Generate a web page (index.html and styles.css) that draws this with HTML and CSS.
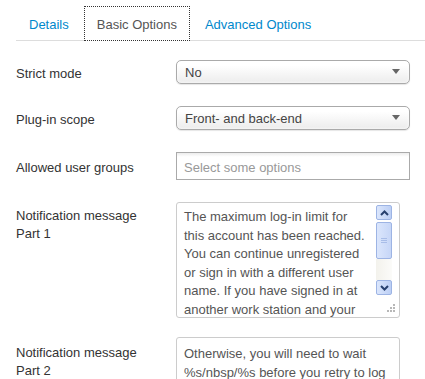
FILE: index.html
```html
<!DOCTYPE html>
<html>
<head>
<meta charset="utf-8">
<link rel="stylesheet" href="styles.css">
</head>
<body>
<div class="page">
  <ul class="tabs">
    <li class="tab"><a href="#">Details</a></li>
    <li class="tab active"><a href="#">Basic Options</a></li>
    <li class="tab"><a href="#">Advanced Options</a></li>
  </ul>
  <div class="form">
    <div class="row row-select">
      <div class="label">Strict mode</div>
      <div class="select"><span class="select-text">No</span><svg class="caret" width="8" height="5" viewBox="0 0 8 5"><polygon points="0,0 8,0 4,5" fill="#666"/></svg></div>
    </div>
    <div class="row row-select">
      <div class="label">Plug-in scope</div>
      <div class="select"><span class="select-text">Front- and back-end</span><svg class="caret" width="8" height="5" viewBox="0 0 8 5"><polygon points="0,0 8,0 4,5" fill="#666"/></svg></div>
    </div>
    <div class="row row-input">
      <div class="label">Allowed user groups</div>
      <div class="multi"><span class="placeholder">Select some options</span></div>
    </div>
    <div class="row row-text">
      <div class="label label-text">Notification message<br>Part 1</div>
      <div class="textarea">
        <div class="ta-text">The maximum log-in limit for this account has been reached. You can continue unregistered or sign in with a different user name. If you have signed in at another work station and your session is still active there, you will need to log out first.</div>
        <div class="scrollbar">
          <div class="sb-btn"><svg width="9" height="6" viewBox="0 0 9 6"><polyline points="1,5 4.5,1.5 8,5" fill="none" stroke="#27406e" stroke-width="2"/></svg></div>
          <div class="sb-thumb"><span class="grip-line"></span><span class="grip-line"></span><span class="grip-line"></span></div>
          <div class="sb-track"></div>
          <div class="sb-btn"><svg width="9" height="6" viewBox="0 0 9 6"><polyline points="1,1 4.5,4.5 8,1" fill="none" stroke="#27406e" stroke-width="2"/></svg></div>
          <div class="sb-corner">
            <svg width="8" height="8" viewBox="0 0 8 8"><g fill="#b8b8b8"><rect x="6" y="0" width="2" height="2"/><rect x="3" y="3" width="2" height="2"/><rect x="6" y="3" width="2" height="2"/><rect x="0" y="6" width="2" height="2"/><rect x="3" y="6" width="2" height="2"/><rect x="6" y="6" width="2" height="2"/></g></svg>
          </div>
        </div>
      </div>
    </div>
    <div class="row row-text row-last">
      <div class="label label-text">Notification message<br>Part 2</div>
      <div class="textarea textarea-plain">
        <div class="ta-text">Otherwise, you will need to wait %s/nbsp/%s before you retry to log in again.</div>
      </div>
    </div>
  </div>
</div>
</body>
</html>
```
FILE: styles.css
```css
html, body {
  margin: 0;
  padding: 0;
  background: #fff;
}
body {
  font-family: "Liberation Sans", Arial, sans-serif;
  font-size: 13px;
  color: #333;
  overflow: hidden;
}
.page {
  padding: 6px 0 0 16px;
}
.tabs {
  display: flex;
  gap: 2px;
  list-style: none;
  margin: 0;
  padding: 0;
  border-bottom: 1px solid #ddd;
}
.tab {
  margin-bottom: -1px;
}
.tab a {
  display: block;
  padding: 9px 12px 6px;
  line-height: 18px;
  border: 1px solid transparent;
  color: #0088cc;
  text-decoration: none;
}
.tab.active a {
  border: 1px dotted #333;
  background: #fff;
  color: #555;
}
.form {
  padding-top: 19px;
}
.row {
  display: flex;
  align-items: flex-start;
}
.row-select {
  margin-bottom: 22px;
}
.row-select + .row-input {
  margin-top: 1px;
}
.row-input {
  margin-bottom: 22px;
}
.row-text {
  margin-bottom: 19px;
}
.label {
  width: 160px;
  flex: none;
  line-height: 18px;
  padding-top: 5px;
}
.row-input .label {
  padding-top: 7px;
}
.label-text {
  padding-top: 5px;
}
.row-last .label-text {
  padding-top: 7px;
}
.select {
  box-sizing: border-box;
  width: 234px;
  height: 24px;
  border: 1px solid #aaa;
  border-radius: 5px;
  background: linear-gradient(#ffffff 20%, #ececec 100%);
  box-shadow: 0 0 3px #fff inset, 0 1px 1px rgba(0,0,0,0.1);
  display: flex;
  align-items: center;
  padding: 0 9px 0 8px;
  color: #444;
}
.select-text {
  flex: 1;
  line-height: 22px;
  padding-top: 2px;
}
.caret {
  display: block;
  margin-bottom: 1px;
}
.multi {
  box-sizing: border-box;
  width: 234px;
  height: 28px;
  border: 1px solid #aaa;
  background: linear-gradient(#eeeeee 1%, #ffffff 15%);
  display: flex;
  align-items: center;
  padding: 2px 7px 0;
}
.placeholder {
  color: #999;
}
.textarea {
  box-sizing: border-box;
  width: 224px;
  height: 116px;
  border: 1px solid #ccc;
  border-radius: 3px;
  display: flex;
  overflow: hidden;
  background: #fff;
  color: #555;
}
.ta-text {
  flex: 1;
  padding: 5px 0 0 7px;
  line-height: 18.5px;
  overflow: hidden;
}
.textarea-plain .ta-text {
  padding: 7px 6px 0 7px;
}
.scrollbar {
  flex: none;
  width: 16px;
  margin: 2px 7px 2px 6px;
  display: flex;
  flex-direction: column;
}
.sb-btn {
  box-sizing: border-box;
  height: 15px;
  border: 1px solid #9db4e4;
  border-radius: 2px;
  background: linear-gradient(to right, #dbe6fc, #bccff5);
  display: flex;
  align-items: center;
  justify-content: center;
}
.sb-thumb {
  box-sizing: border-box;
  height: 37px;
  margin-top: 2px;
  border: 1px solid #9db4e4;
  border-radius: 2px;
  background: linear-gradient(to right, #dbe6fc, #c6d6f7);
  display: flex;
  flex-direction: column;
  align-items: center;
  justify-content: center;
  gap: 1px;
}
.grip-line {
  display: block;
  width: 6px;
  height: 1px;
  background: #a8bde8;
}
.sb-track {
  flex: none;
  height: 21px;
  background: linear-gradient(to right, #f3f2ec, #fbfbf9);
}
.sb-corner {
  flex: 1;
  display: flex;
  align-items: flex-end;
  justify-content: flex-end;
  padding: 0 0 3px 0;
  margin-right: -3px;
}
.sb-corner svg {
  display: block;
}
```
